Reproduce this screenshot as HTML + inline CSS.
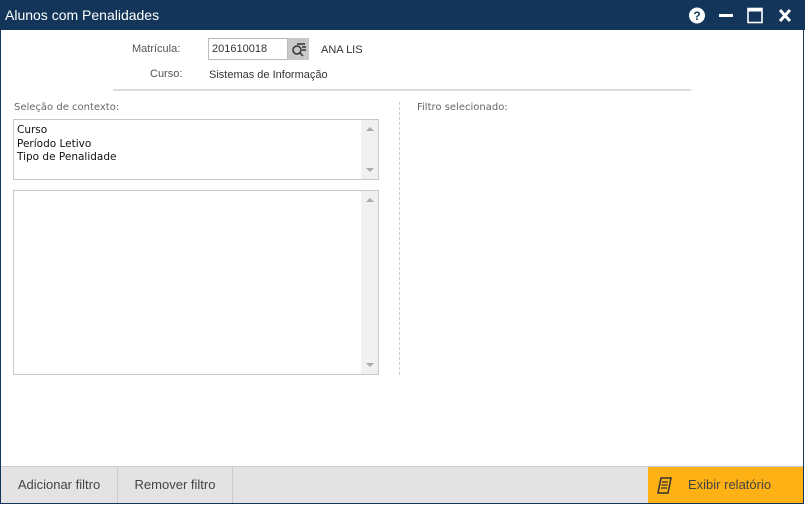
<!DOCTYPE html><html><head><style>
*{margin:0;padding:0;box-sizing:border-box}
body{width:805px;height:505px;background:#fff;font-family:"Liberation Sans",sans-serif;position:relative;overflow:hidden}
.win{position:absolute;left:0;top:0;width:804px;height:504px;border:1px solid #13355a;border-top:none}
.title{position:absolute;left:0;top:0;width:805px;height:30px;background:#13355a;color:#fff;font-size:14px;line-height:30px;padding-left:5px}
.a{position:absolute;font-size:11px;color:#333;white-space:nowrap}
.box{position:absolute;border:1px solid #c8c8c8;background:#fff}
.sb{position:absolute;right:0;top:0;bottom:0;width:17px;background:#f0f0f0}
.sb i{position:absolute;left:5px;width:0;height:0;border-left:4px solid transparent;border-right:4px solid transparent}
.up{top:7px;border-bottom:4px solid #aaa}
.dn{bottom:7px;border-top:4px solid #aaa}
.foot{position:absolute;left:1px;top:466px;width:802px;height:37px;background:#e3e3e3;border-top:1px solid #ccc}
.btn{position:absolute;top:0;height:36px;line-height:36px;font-size:13px;color:#444;text-align:center;border-right:1px solid #ccc}
</style></head><body>
<div class="win"></div>
<div class="title">Alunos com Penalidades</div>
<svg style="position:absolute;left:688px;top:7px" width="110" height="17">
<circle cx="9" cy="8.5" r="8" fill="#fff"/><text x="9" y="13" font-size="12" font-weight="bold" text-anchor="middle" fill="#13355a" font-family="Liberation Sans">?</text>
<rect x="31" y="7" width="14" height="3" fill="#fff"/>
<rect x="60" y="1.5" width="14" height="14" fill="none" stroke="#fff" stroke-width="1.6"/><rect x="60" y="1.5" width="14" height="3" fill="#fff"/>
<path d="M92 3 L102 14 M102 3 L92 14" stroke="#fff" stroke-width="3"/>
</svg>
<div class="a" style="left:132px;top:43px;color:#555">Matrícula:</div>
<div class="box" style="left:208px;top:38px;width:80px;height:22px;border-color:#bbb"></div>
<div class="a" style="left:212px;top:43px">201610018</div>
<div style="position:absolute;left:288px;top:38px;width:21px;height:22px;background:#c8c8c8"></div>
<svg style="position:absolute;left:291px;top:42px" width="16" height="15"><circle cx="6" cy="8" r="4" fill="none" stroke="#333" stroke-width="1.5"/><path d="M9 11l3 3M6 2h8M11 5h4M11 8h4" stroke="#333" stroke-width="1.5"/></svg>
<div class="a" style="left:321px;top:44px">ANA LIS</div>
<div class="a" style="left:150px;top:68px;color:#555">Curso:</div>
<div class="a" style="left:209px;top:69px">Sistemas de Informação</div>
<div style="position:absolute;left:113px;top:89px;width:578px;height:2px;background:#ddd"></div>
<div class="a" style="left:14px;top:102px;color:#666;font-family:'DejaVu Sans',sans-serif;font-size:10px">Seleção de contexto:</div>
<div class="a" style="left:417px;top:102px;color:#666;font-family:'DejaVu Sans',sans-serif;font-size:10px">Filtro selecionado:</div>
<div style="position:absolute;left:399px;top:102px;height:273px;border-left:1px dashed #ccc"></div>
<div class="box" style="left:13px;top:119px;width:366px;height:61px"><div class="sb"><i class="up"></i><i class="dn"></i></div>
<div style="position:absolute;left:3px;top:4px;font-size:10.5px;line-height:13.5px;color:#111;font-family:'DejaVu Sans',sans-serif">Curso<br>Período Letivo<br>Tipo de Penalidade</div></div>
<div class="box" style="left:13px;top:190px;width:366px;height:185px"><div class="sb"><i class="up"></i><i class="dn"></i></div></div>
<div class="foot">
<div class="btn" style="left:0;width:117px">Adicionar filtro</div>
<div class="btn" style="left:117px;width:115px">Remover filtro</div>
<div class="btn" style="left:647px;width:155px;background:#fdb114;border:none;color:#444;text-align:left;padding-left:40px">Exibir relatório</div>
<svg style="position:absolute;left:656px;top:10px" width="16" height="18"><path d="M4 1h10l-3 15H1z" fill="none" stroke="#333" stroke-width="1.5"/><path d="M5 5h6M4.5 8h6M4 11h6" stroke="#333" stroke-width="1.2"/></svg>
</div>
</body></html>
